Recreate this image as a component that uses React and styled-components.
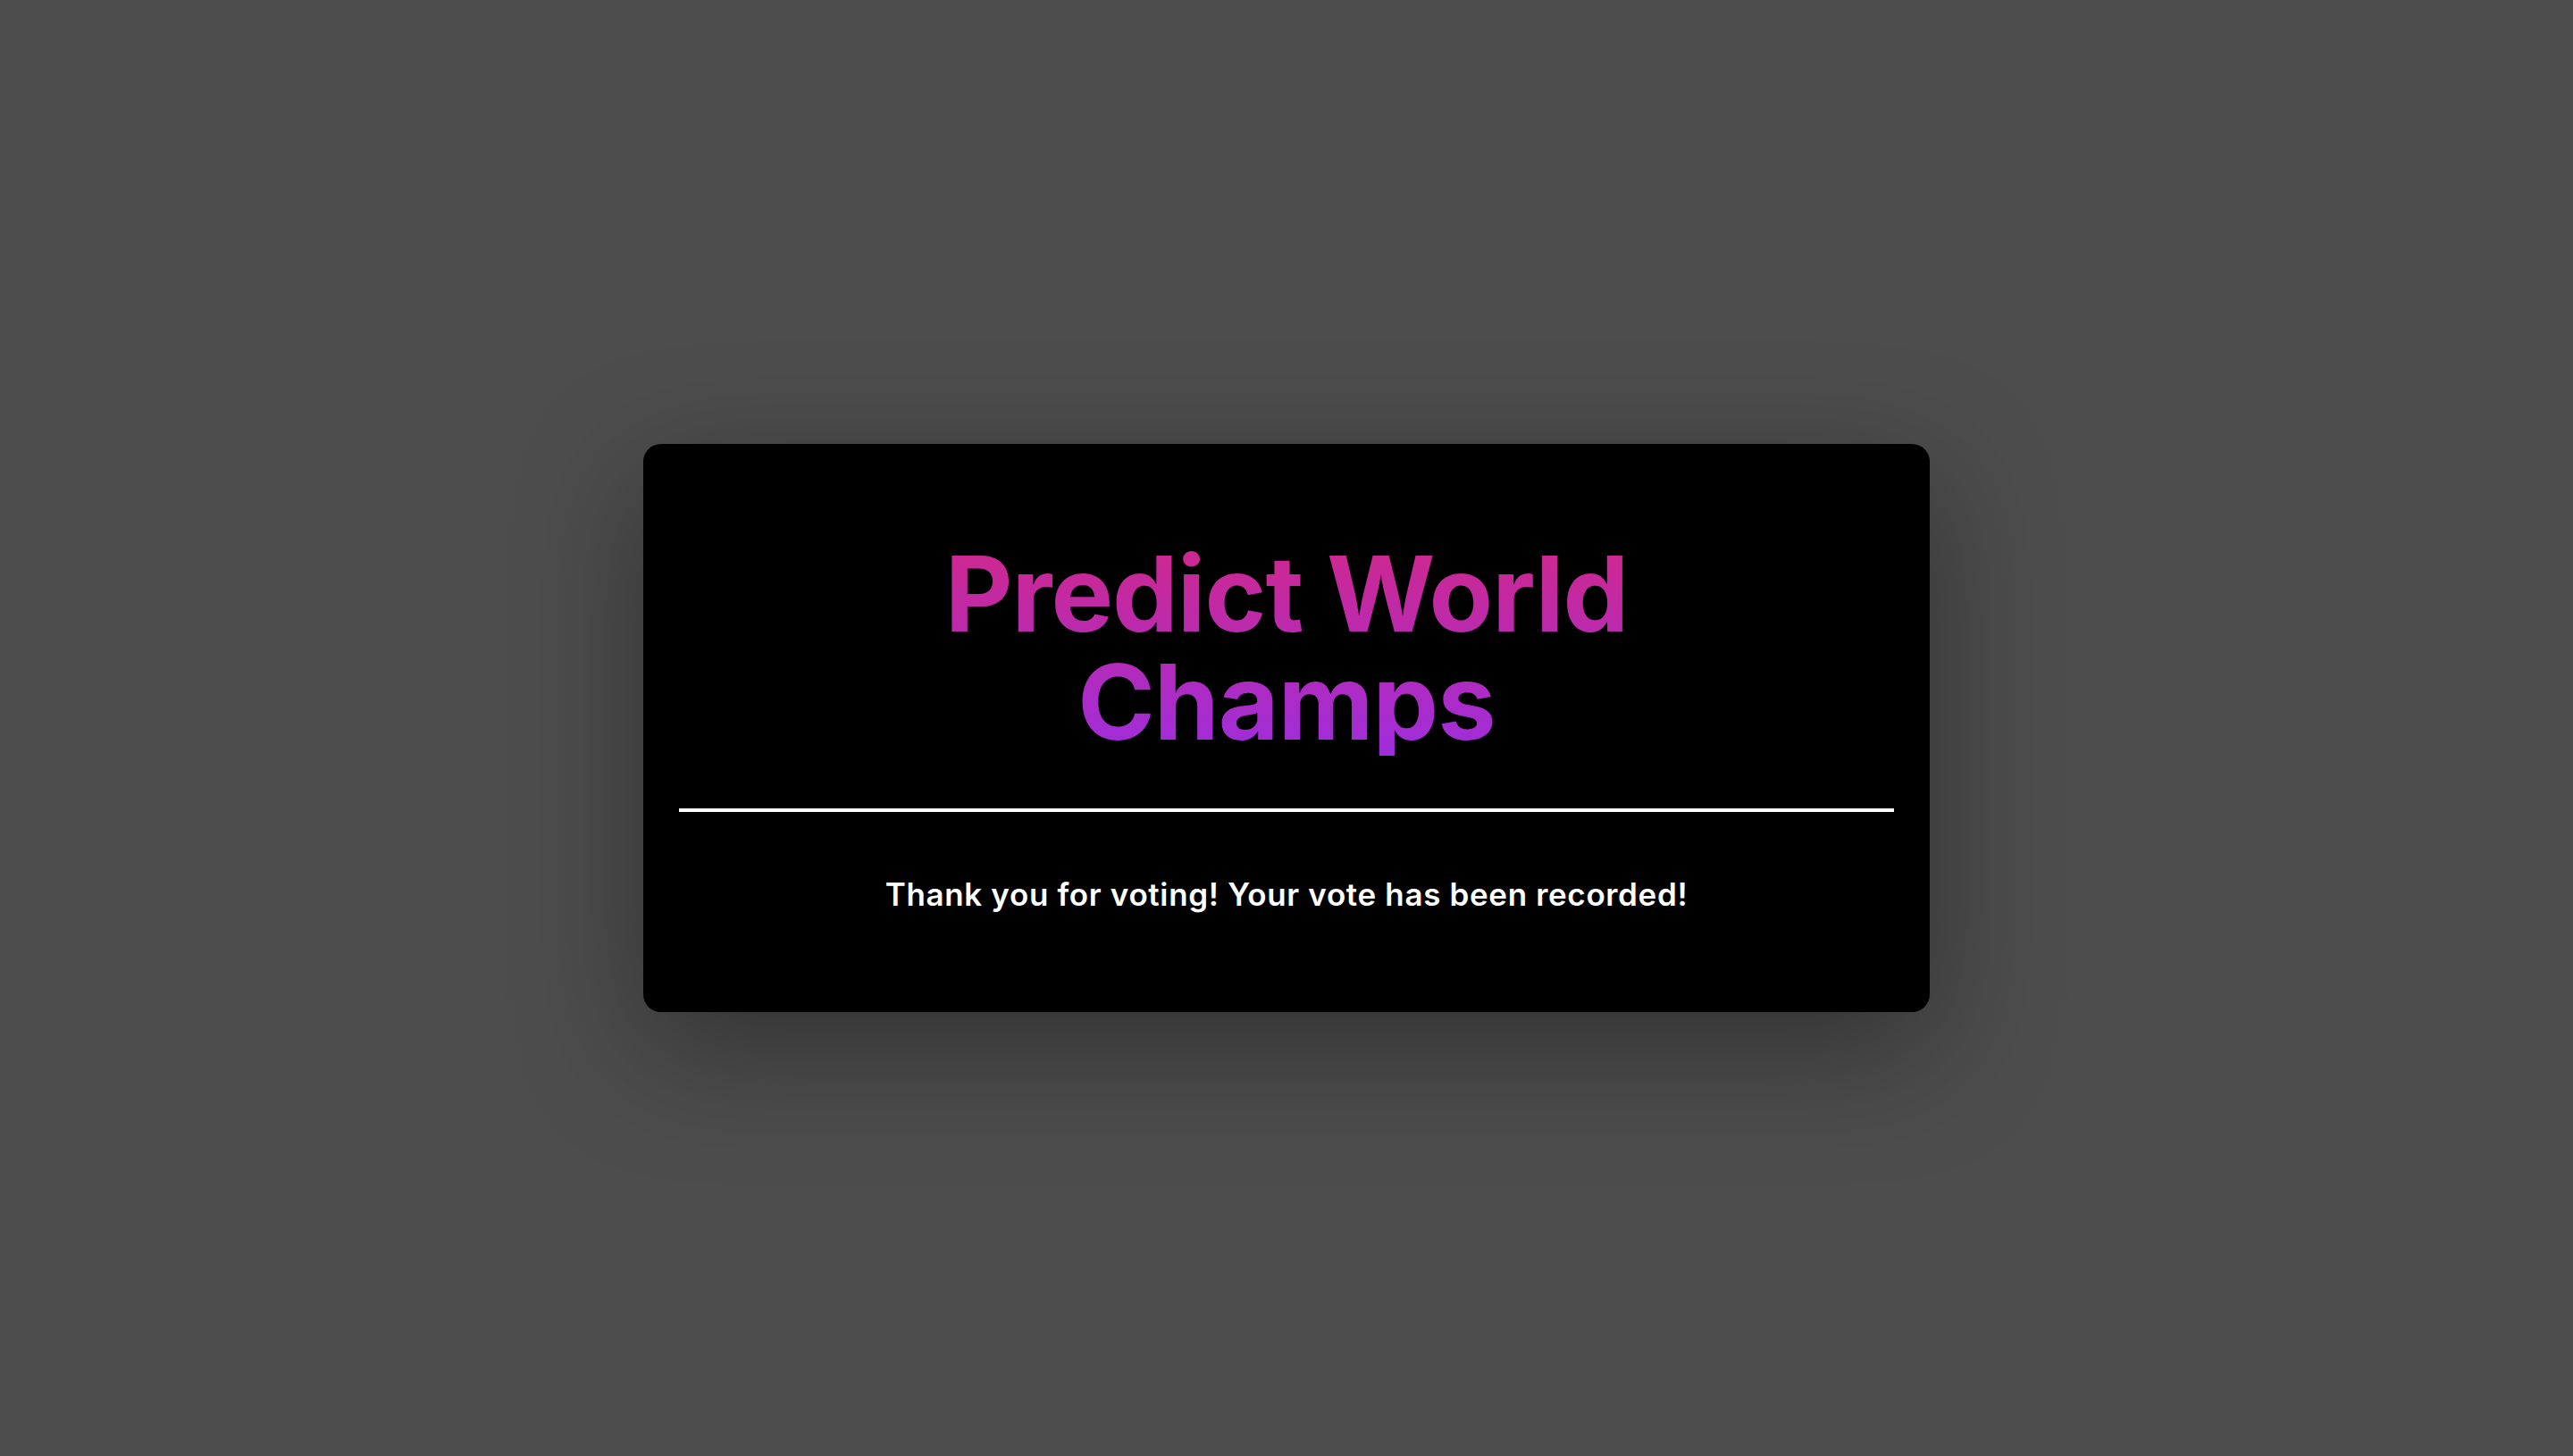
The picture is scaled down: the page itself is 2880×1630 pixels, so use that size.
import React from 'react';
import styled, { createGlobalStyle } from 'styled-components';

const GlobalStyle = createGlobalStyle`
  html, body {
    margin: 0;
    padding: 0;
    background: #4d4d4d;
    font-family: Inter, "Noto Sans", sans-serif;
  }
`;

const Page = styled.div`
  min-height: 100vh;
  display: flex;
  align-items: center;
  justify-content: center;
`;

const Card = styled.div`
  width: 1440px;
  box-sizing: border-box;
  padding: 40px;
  background: #000;
  border-radius: 20px;
  box-shadow: 0 40px 140px rgba(0, 0, 0, 0.35);
  display: flex;
  flex-direction: column;
  align-items: center;
`;

const Title = styled.h1`
  margin: 67px 0 59px;
  max-width: 820px;
  font-size: 117px;
  line-height: 121px;
  font-weight: 700;
  letter-spacing: -1px;
  text-align: center;
  background: linear-gradient(to bottom, #d0288c, #9e2ddc);
  -webkit-background-clip: text;
  background-clip: text;
  color: transparent;
`;

const Divider = styled.div`
  align-self: stretch;
  height: 4px;
  background: #fff;
`;

const Message = styled.p`
  margin: 72px 0 71px;
  font-size: 35px;
  line-height: 41px;
  font-weight: 600;
  letter-spacing: 0.65px;
  color: #fff;
  text-align: center;
`;

export default function App() {
  return (
    <>
      <GlobalStyle />
      <Page>
        <Card>
          <Title>Predict World Champs</Title>
          <Divider />
          <Message>Thank you for voting! Your vote has been recorded!</Message>
        </Card>
      </Page>
    </>
  );
}
